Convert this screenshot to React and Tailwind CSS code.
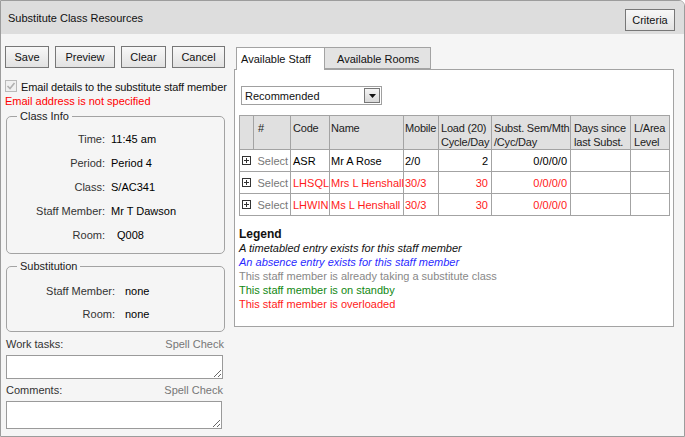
import React from "react";

const staff = [
  { code: "ASR", name: "Mr A Rose", mobile: "2/0", load: "2", subst: "0/0/0/0", red: false },
  { code: "LHSQL", name: "Mrs L Henshall", mobile: "30/3", load: "30", subst: "0/0/0/0", red: true },
  { code: "LHWIN", name: "Ms L Henshall", mobile: "30/3", load: "30", subst: "0/0/0/0", red: true },
];

const Btn = ({ children, className = "" }) => (
  <button
    className={`h-[22px] border border-[#777] bg-gradient-to-b from-[#f8f8f8] to-[#e2e2e2] text-[11px] text-[#111] ${className}`}
  >
    {children}
  </button>
);

const ExpandIcon = () => (
  <svg width="9" height="9" viewBox="0 0 9 9" className="block">
    <rect x="0.5" y="0.5" width="8" height="8" fill="#fff" stroke="#333" />
    <path d="M2 4.5h5M4.5 2v5" stroke="#333" />
  </svg>
);

const InfoRow = ({ label, value, labelW, gap, valueClass = "", h }) => (
  <div className={`flex items-center ${h}`}>
    <div className={`text-right text-[#333] ${labelW}`}>{label}</div>
    <div className={`text-black ${gap} ${valueClass}`}>{value}</div>
  </div>
);

const th = "border border-[#a3a3a3] font-normal pt-[5px] whitespace-nowrap overflow-visible tracking-[-0.2px]";

export default function App() {
  return (
    <div className="w-[685px] h-[437px] overflow-hidden border border-[#9c9c9c] rounded-tr-[6px] bg-[#f5f5f5] font-['Liberation_Sans',Arial,sans-serif] text-[11px] leading-[14px] text-black">
      {/* title bar */}
      <div className="h-[33px] bg-[#dddddd] flex items-center justify-between pl-[7px] pr-[9px]">
        <span className="text-[11px] text-[#111]">Substitute Class Resources</span>
        <Btn className="w-[50px] mt-[5px]">Criteria</Btn>
      </div>

      <div className="flex pl-[4px] pt-[12px]">
        {/* left column */}
        <div className="w-[220px] flex flex-col">
          <div className="flex gap-[6px]">
            <Btn className="w-[44px]">Save</Btn>
            <Btn className="w-[60px]">Preview</Btn>
            <Btn className="w-[45px]">Clear</Btn>
            <Btn className="w-[53px]">Cancel</Btn>
          </div>

          <div className="flex items-center mt-[12px] h-[14px] whitespace-nowrap">
            <svg width="12" height="12" viewBox="0 0 12 12" className="block shrink-0 mt-[-2px]">
              <rect x="0.5" y="0.5" width="11" height="11" fill="#f0f0f0" stroke="#b9b9b9" />
              <path d="M2.5 6l2.5 2.5 4.5-5.5" fill="none" stroke="#b0b0b0" strokeWidth="1.6" />
            </svg>
            <span className="ml-[4px] text-[#111] tracking-[-0.1px]">Email details to the substitute staff member</span>
          </div>
          <div className="text-[#ff0000] h-[14px]">Email address is not specified</div>

          <fieldset className="ml-[1px] mt-[1px] w-[219px] h-[145px] border border-[#a3a3a3] rounded-[5px] px-0">
            <legend className="ml-[10px] px-[3px] text-[#222]">Class Info</legend>
            <div className="pt-[4px]">
              <InfoRow h="h-[24px]" label="Time:" value="11:45 am" labelW="w-[98px]" gap="ml-[6px]" />
              <InfoRow h="h-[24px]" label="Period:" value="Period 4" labelW="w-[98px]" gap="ml-[6px]" />
              <InfoRow h="h-[24px]" label="Class:" value="S/AC341" labelW="w-[98px]" gap="ml-[6px]" />
              <InfoRow h="h-[24px]" label="Staff Member:" value="Mr T Dawson" labelW="w-[98px]" gap="ml-[6px]" />
              <InfoRow h="h-[24px]" label="Room:" value="Q008" labelW="w-[98px]" gap="ml-[12px]" />
            </div>
          </fieldset>

          <fieldset className="ml-[1px] mt-[5px] w-[219px] h-[73px] border border-[#a3a3a3] rounded-[5px] px-0">
            <legend className="ml-[10px] px-[3px] text-[#222]">Substitution</legend>
            <div className="pt-[6px]">
              <InfoRow h="h-[23px]" label="Staff Member:" value="none" labelW="w-[108px]" gap="ml-[10px]" valueClass="text-[#222]" />
              <InfoRow h="h-[23px]" label="Room:" value="none" labelW="w-[108px]" gap="ml-[10px]" valueClass="text-[#222]" />
            </div>
          </fieldset>

          <div className="ml-[1px] mt-[5px] flex justify-between w-[218px]">
            <span className="text-[#333]">Work tasks:</span>
            <span className="text-[#777]">Spell Check</span>
          </div>
          <textarea className="ml-[1px] mt-[4px] w-[217px] h-[24px] border border-[#9a9a9a] bg-white block" />

          <div className="ml-[1px] mt-[4px] flex justify-between w-[217px]">
            <span className="text-[#333]">Comments:</span>
            <span className="text-[#777]">Spell Check</span>
          </div>
          <textarea className="ml-[1px] mt-[4px] w-[216px] h-[28px] border border-[#9a9a9a] bg-white block" />
        </div>

        {/* right panel */}
        <div className="ml-[9px] mt-[1px] w-[440px] flex flex-col">
          <div className="flex items-start pl-[2px]">
            <div className="w-[89px] h-[23px] bg-white border border-b-0 border-[#a3a3a3] pl-[4px] pt-[4px] relative z-10 text-[#111]">
              Available Staff
            </div>
            <div className="w-[106px] h-[22px] bg-[#e3e3e3] border border-[#a3a3a3] border-l-0 pl-[12px] pt-[4px] text-[#111]">
              Available Rooms
            </div>
          </div>
          <div className="mt-[-1px] h-[258px] bg-white border border-[#a3a3a3] px-[4px]">
            <div className="ml-[2px] mt-[16px] w-[141px] h-[19px] border border-[#a0a0a0] bg-white flex items-center justify-between pl-[3px] pr-[1px]">
              <span className="text-[#111]">Recommended</span>
              <div className="w-[16px] h-[15px] border border-[#777] bg-gradient-to-b from-[#f4f4f4] to-[#d8d8d8] flex items-center justify-center">
                <svg width="7" height="4" viewBox="0 0 7 4">
                  <path d="M0 0h7L3.5 4z" fill="#111" />
                </svg>
              </div>
            </div>

            <table className="mt-[10px] w-[430px] table-fixed border-collapse">
              <colgroup>
                <col className="w-[14px]" />
                <col className="w-[37px]" />
                <col className="w-[39px]" />
                <col className="w-[74px]" />
                <col className="w-[35px]" />
                <col className="w-[53px]" />
                <col className="w-[79px]" />
                <col className="w-[60px]" />
                <col className="w-[39px]" />
              </colgroup>
              <thead>
                <tr className="h-[34px] bg-[#e0e0e0] text-left align-top text-[#222]">
                  <th className="border border-[#a3a3a3] font-normal"></th>
                  <th className={`${th} pl-[4px]`}>#</th>
                  <th className={`${th} pl-[2px]`}>Code</th>
                  <th className={`${th} pl-[1px]`}>Name</th>
                  <th className={`${th} pl-[1px]`}>Mobile</th>
                  <th className={`${th} pl-[2px]`}>
                    Load (20)
                    <br />
                    Cycle/Day
                  </th>
                  <th className={`${th} pl-[2px]`}>
                    Subst. Sem/Mth
                    <br />
                    /Cyc/Day
                  </th>
                  <th className={`${th} pl-[3px]`}>
                    Days since
                    <br />
                    last Subst.
                  </th>
                  <th className={`${th} pl-[3px]`}>
                    L/Area
                    <br />
                    Level
                  </th>
                </tr>
              </thead>
              <tbody>
                {staff.map((s) => {
                  const c = s.red ? "text-[#ff1a1a]" : "text-black";
                  return (
                    <tr key={s.code} className="h-[22px]">
                      <td className="border-l border-b border-[#a3a3a3] pl-[2px]">
                        <ExpandIcon />
                      </td>
                      <td className="border-b border-r border-[#a3a3a3] pl-[4px] text-[#777] whitespace-nowrap">Select</td>
                      <td className={`border-b border-r border-[#a3a3a3] pl-[2px] ${c}`}>{s.code}</td>
                      <td className={`border-b border-r border-[#a3a3a3] pl-[1px] whitespace-nowrap ${c}`}>{s.name}</td>
                      <td className={`border-b border-r border-[#a3a3a3] pl-[1px] ${c}`}>{s.mobile}</td>
                      <td className={`border-b border-r border-[#a3a3a3] pr-[3px] text-right ${c}`}>{s.load}</td>
                      <td className={`border-b border-r border-[#a3a3a3] pr-[3px] text-right ${c}`}>{s.subst}</td>
                      <td className="border-b border-r border-[#a3a3a3]"></td>
                      <td className="border-b border-r border-[#a3a3a3]"></td>
                    </tr>
                  );
                })}
              </tbody>
            </table>

            <div className="mt-[11px]">
              <div className="font-bold text-[12px] text-[#111]">Legend</div>
              <div className="italic text-[#111]">A timetabled entry exists for this staff member</div>
              <div className="italic text-[#2a2aff]">An absence entry exists for this staff member</div>
              <div className="text-[#888]">This staff member is already taking a substitute class</div>
              <div className="text-[#118811]">This staff member is on standby</div>
              <div className="text-[#ff1a1a]">This staff member is overloaded</div>
            </div>
          </div>
        </div>
      </div>
    </div>
  );
}
